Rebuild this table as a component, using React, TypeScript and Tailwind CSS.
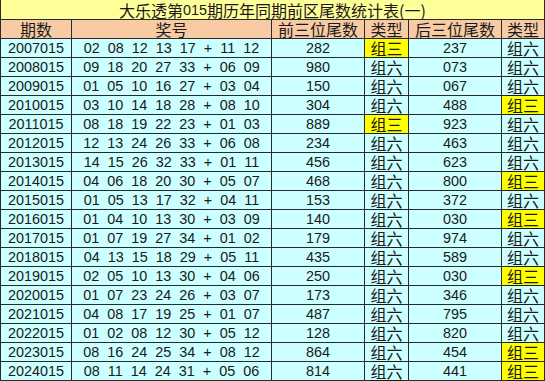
import React from "react";

type Row = [string, string, string, string, string, string];

const rows: Row[] = [
  ["2007015", "02 08 12 13 17 + 11 12", "282", "组三", "237", "组六"],
  ["2008015", "09 18 20 27 33 + 06 09", "980", "组六", "073", "组六"],
  ["2009015", "01 05 10 16 27 + 03 04", "150", "组六", "067", "组六"],
  ["2010015", "03 10 14 18 28 + 08 10", "304", "组六", "488", "组三"],
  ["2011015", "08 18 19 22 23 + 01 03", "889", "组三", "923", "组六"],
  ["2012015", "12 13 24 26 33 + 06 08", "234", "组六", "463", "组六"],
  ["2013015", "14 15 26 32 33 + 01 11", "456", "组六", "623", "组六"],
  ["2014015", "04 06 18 20 30 + 05 07", "468", "组六", "800", "组三"],
  ["2015015", "01 05 13 17 32 + 04 11", "153", "组六", "372", "组六"],
  ["2016015", "01 04 10 13 30 + 03 09", "140", "组六", "030", "组三"],
  ["2017015", "01 07 19 27 34 + 01 02", "179", "组六", "974", "组六"],
  ["2018015", "04 13 15 18 29 + 05 11", "435", "组六", "589", "组六"],
  ["2019015", "02 05 10 13 30 + 04 06", "250", "组六", "030", "组三"],
  ["2020015", "01 07 23 24 26 + 03 07", "173", "组六", "346", "组六"],
  ["2021015", "04 08 17 19 25 + 01 07", "487", "组六", "795", "组六"],
  ["2022015", "01 02 08 12 30 + 05 12", "128", "组六", "820", "组六"],
  ["2023015", "08 16 24 25 34 + 08 12", "864", "组六", "454", "组三"],
  ["2024015", "08 11 14 24 31 + 05 06", "814", "组六", "441", "组三"],
];

const num =
  'flex items-center justify-center bg-[#ccffff] text-[14.4px] leading-[16px] text-[#1a1a1a] whitespace-pre [word-spacing:4px] font-["Liberation_Sans",_Arial,_sans-serif]';
const cjk =
  'flex items-center justify-center text-[16px] leading-[16px] text-[#1a1a1a] font-["Noto_Sans_CJK_SC",_sans-serif]';

function TypeCell({ v }: { v: string }) {
  const hot = v === "组三";
  return (
    <div className={`${cjk} ${hot ? "bg-[#ffff00]" : "bg-[#ccffff]"}`}>
      <span className="underline underline-offset-[2px] decoration-1">{v}</span>
    </div>
  );
}

export default function App() {
  return (
    <div className="w-[545px] h-[381px] bg-white">
      <div className="grid grid-cols-[70px_199px_92px_43px_92px_42px] grid-rows-[19px_repeat(19,18px)] gap-px bg-[#2a2a2a] border-l border-r border-b border-[#2a2a2a] w-[545px]">
        <div className={`${cjk} col-span-6 bg-[#ffff99] pt-px`}>
          大乐透第<span className='font-["Liberation_Sans",_Arial,_sans-serif] text-[14.4px]'>015</span>期历年同期前区尾数统计表(一)
        </div>
        {["期数", "奖号", "前三位尾数", "类型", "后三位尾数", "类型"].map((h, i) => (
          <div key={i} className={`${cjk} bg-[#f8cba4]`}>
            {h}
          </div>
        ))}
        {rows.map((r) => (
          <React.Fragment key={r[0]}>
            <div className={num}>{r[0]}</div>
            <div className={num}>{r[1]}</div>
            <div className={num}>{r[2]}</div>
            <TypeCell v={r[3]} />
            <div className={num}>{r[4]}</div>
            <TypeCell v={r[5]} />
          </React.Fragment>
        ))}
      </div>
    </div>
  );
}
